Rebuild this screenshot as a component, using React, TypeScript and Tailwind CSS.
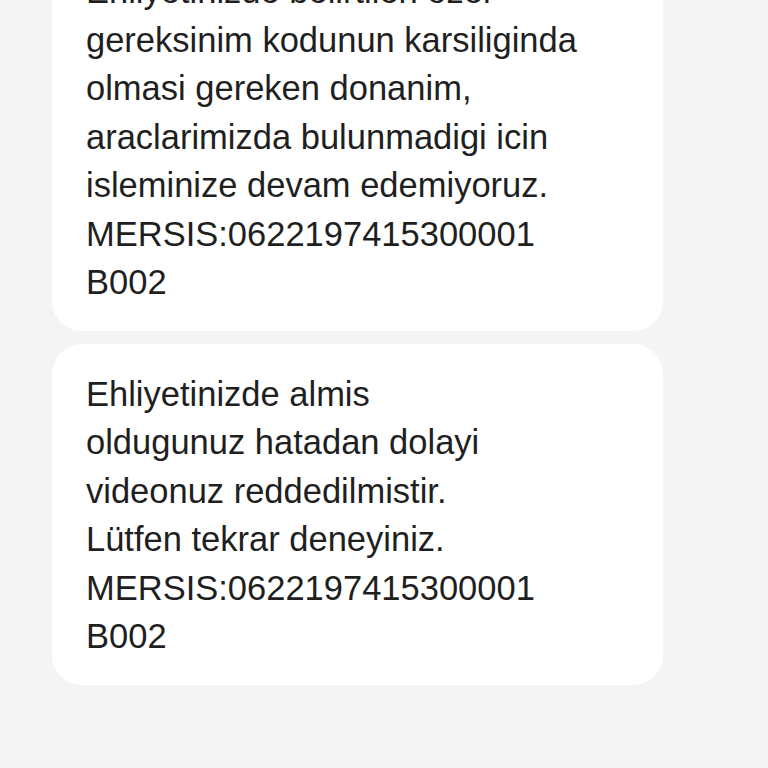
export default function App() {
  const first = [
    "Ehliyetinizde belirtilen ozel",
    "gereksinim kodunun karsiliginda",
    "olmasi gereken donanim,",
    "araclarimizda bulunmadigi icin",
    "isleminize devam edemiyoruz.",
    "MERSIS:0622197415300001",
    "B002",
  ];
  const second = [
    "Ehliyetinizde almis",
    "oldugunuz hatadan dolayi",
    "videonuz reddedilmistir.",
    "Lütfen tekrar deneyiniz.",
    "MERSIS:0622197415300001",
    "B002",
  ];

  return (
    <div
      className="h-[768px] w-[768px] overflow-hidden bg-[#f4f4f4]"
      style={{ fontFamily: '"Liberation Sans", Arial, sans-serif' }}
    >
      <div className="ml-[52px] mt-[-59px] flex w-[611px] flex-col gap-[13px]">
        {[first, second].map((lines, i) => (
          <div
            key={i}
            className="rounded-[30px] bg-white pl-[34px] pr-4 pt-[26px] pb-[24px] text-[34.5px] leading-[48.5px] text-[#1f1f1f]"
          >
            {lines.map((l) => (
              <div key={l}>{l}</div>
            ))}
          </div>
        ))}
      </div>
    </div>
  );
}
